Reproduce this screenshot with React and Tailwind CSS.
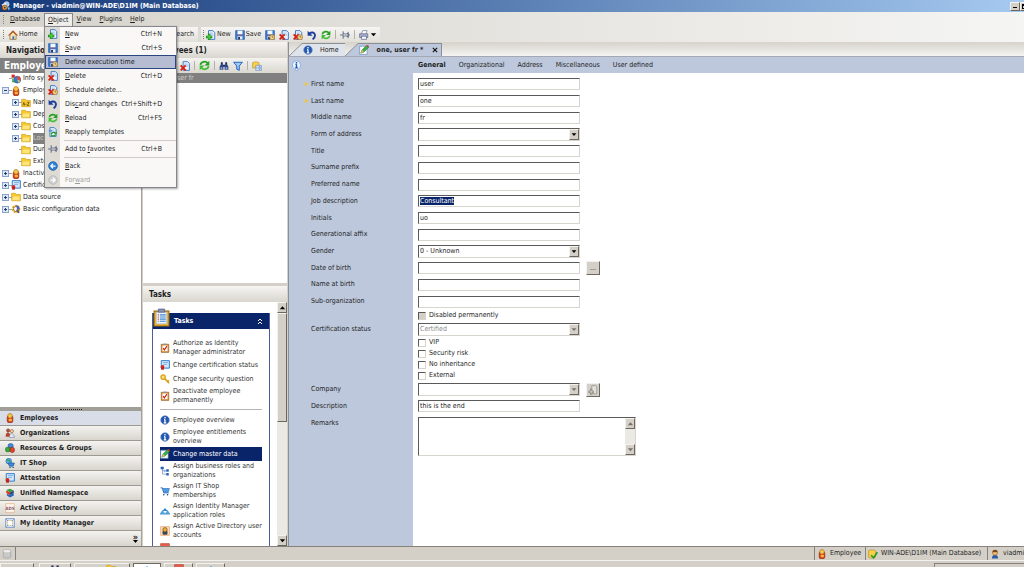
import React, { useEffect, useRef } from "react";

const Page = ({ x = 3 }) => (
  <>
    <path d={`M${x} 1h7l3 3v11H${x}z`} fill="#e8f1fd" stroke="#2f6fc4" strokeWidth="1.4" />
    <path d={`M${x + 2} 5h5M${x + 2} 8h6`} stroke="#6fa3e0" />
  </>
);

const Clock = () => (
  <>
    <circle cx="11.5" cy="11.5" r="4" fill="#f4d58a" stroke="#a3762b" />
    <path d="M11.5 9v2.5h2" stroke="#5f4212" fill="none" />
  </>
);

const Cross = () => (
  <path d="M1 7l8 8M9 7l-8 8" stroke="#d8200f" strokeWidth="3" fill="none" />
);

const Disk = () => (
  <>
    <path d="M1 1h14v14H1z" fill="#2f7bdc" stroke="#1b4fa0" />
    <path d="M4 1h8v6H4z" fill="#f5f9ff" />
    <path d="M4 10h8v5H4z" fill="#e8edf5" />
    <path d="M2 8h12" stroke="#d64a35" />
    <path d="M5 11h3v4H5z" fill="#26344f" />
  </>
);

const Person = () => (
  <>
    <rect x="3.5" y="4" width="9" height="11.5" rx="3" fill="#d93a1d" stroke="#8c2412" />
    <circle cx="8" cy="4.5" r="3.7" fill="#f8c64a" stroke="#a96d12" />
    <rect x="6" y="9" width="5" height="4" rx="1" fill="#f6b93b" />
  </>
);

const glyphs = {
  app: (
    <>
      <circle cx="9" cy="5" r="4" fill="#9cc7f2" stroke="#e3efff" />
      <path d="M1 6l6-4 2 5-5 3z" fill="#e9eef7" />
      <circle cx="6" cy="10.5" r="4" fill="#e99a32" stroke="#7b4210" />
      <circle cx="6" cy="10.5" r="1.5" fill="#1d3e7e" />
      <path d="M10 9l5 2-3 4z" fill="#6fb2ee" />
    </>
  ),
  home: (
    <>
      <path d="M3 8v7h10V8L8 3z" fill="#f6e3b5" stroke="#8a5a21" />
      <path d="M1 9l7-7 7 7" fill="none" stroke="#b4541c" strokeWidth="2" />
      <path d="M7 10h3v5H7z" fill="#3e74bd" />
    </>
  ),
  new: (
    <>
      <Page x={4} />
      <path d="M5 6v10M0 11h10" stroke="#167d16" strokeWidth="4" />
      <path d="M5 7v8M1 11h8" stroke="#4fd03f" strokeWidth="2.2" />
    </>
  ),
  save: <Disk />,
  saveTime: (
    <>
      <Disk />
      <Clock />
    </>
  ),
  delete: (
    <>
      <Page x={5} />
      <Cross />
    </>
  ),
  deleteTime: (
    <>
      <Page x={4} />
      <Cross />
      <Clock />
    </>
  ),
  undo: (
    <>
      <path d="M4 5c8-4 12 4 5 10" fill="none" stroke="#1c3f9c" strokeWidth="3" />
      <path d="M1 1v8h8z" fill="#1c3f9c" />
    </>
  ),
  reload: (
    <>
      <path d="M2 7c1-5 8-6 11-2" fill="none" stroke="#27a022" strokeWidth="2.6" />
      <path d="M15 1v7H8z" fill="#27a022" />
      <path d="M14 9c-1 5-8 6-11 2" fill="none" stroke="#3fbd35" strokeWidth="2.6" />
      <path d="M1 15V8h7z" fill="#3fbd35" />
    </>
  ),
  templates: (
    <>
      <Page x={3} />
      <path d="M1 6l5 0-2-2M6 6l-2 2" stroke="#2f6fc4" fill="none" />
      <path d="M5 12c1-4 5-4 7-2M12 12c-1 3-5 3-7 1" fill="none" stroke="#1f9a2b" strokeWidth="2" />
      <path d="M14 7v4h-4z" fill="#1f9a2b" />
    </>
  ),
  pin: (
    <path
      d="M0 8h5M5 2v12M5 5c3 2 5 2 8 0v6c-3-2-5-2-8 0M13 3v10M13 8h3"
      fill="none"
      stroke="#5f6b85"
      strokeWidth="1.5"
    />
  ),
  back: (
    <>
      <circle cx="8" cy="8" r="7" fill="#2a80d8" stroke="#14509c" />
      <path d="M12 8H5M8 4.500L4.500 8 8 11.500" fill="none" stroke="#fff" strokeWidth="2" />
    </>
  ),
  forward: (
    <>
      <circle cx="8" cy="8" r="7" fill="#cfcfcf" stroke="#b3b3b3" />
      <path d="M4 8h7M8 4.500L11.500 8 8 11.500" fill="none" stroke="#fff" strokeWidth="2" />
    </>
  ),
  print: (
    <>
      <path d="M4 6l2-5h7l-2 5" fill="#fff" stroke="#5c6689" />
      <path d="M1 6h13v6H1z" fill="#aab2cf" stroke="#4d577d" />
      <path d="M4 10h8v5H4z" fill="#f5f6fb" stroke="#4d577d" />
    </>
  ),
  find: (
    <>
      <path d="M3 2h3v4H3zM10 2h3v4h-3zM6 6h4v3H6z" fill="#1d2f5e" />
      <path d="M1 14V9l2-4h3l1 4v5zM9 14V9l1-4h3l2 4v5z" fill="#2c4580" />
      <path d="M2.500 10h3v3h-3zM10.500 10h3v3h-3z" fill="#94a8d3" />
    </>
  ),
  filter: <path d="M1 2h14l-5 6v7l-4-2V8z" fill="#9cc8f7" stroke="#1f5fbb" strokeWidth="1.5" />,
  folderPage: (
    <>
      <path d="M1 3c0-2 10-2 10 0v8H1z" fill="#fbd24a" stroke="#b78a17" />
      <path d="M6 7h9v8H6z" fill="#eef4fd" stroke="#5d7fb3" />
      <path d="M8 9v4M11 9h2v4h-2z" fill="none" stroke="#2f6fc4" />
    </>
  ),
  folder: (
    <>
      <path d="M1 2h6l1.500 2H15v10H1z" fill="#f7c92e" stroke="#c79a16" />
      <path d="M3 7h11l-1 6H2z" fill="#fde47c" />
    </>
  ),
  folderAz: (
    <>
      <path d="M1 2h6l1.500 2H15v10H1z" fill="#f7c92e" stroke="#c79a16" />
      <path d="M3 12l1.500-5L6 12M7 10h2M10 7h3l-3 5h3" fill="none" stroke="#5a430a" strokeWidth="1.200" />
    </>
  ),
  info: (
    <>
      <circle cx="8" cy="8" r="7" fill="#2458b0" stroke="#7f9fd0" />
      <path d="M8 3v2.500M8 7v6M6.500 7.500H8M6 12.500h4" stroke="#fff" strokeWidth="2" />
    </>
  ),
  hint: (
    <>
      <path d="M8 1a6.500 6.500 0 0 1 2 12.500L8 16l-2-2.500A6.500 6.500 0 0 1 8 1z" fill="#e8f3ff" stroke="#6d9bd3" />
      <path d="M8 3v2M8 6v6M6.500 6.500H8M6 11.500h4" stroke="#1e57b4" strokeWidth="2" />
    </>
  ),
  chart: (
    <>
      <path d="M1 1h5v5H1z" fill="#d8261c" />
      <circle cx="10" cy="9" r="5.500" fill="#3d78cf" stroke="#24549c" />
      <path d="M10 9V3.500A5.500 5.500 0 0 1 15.500 9z" fill="#e8462c" />
      <path d="M10 9l5 2-3 3z" fill="#f9cf47" />
      <path d="M3 7v5h3" fill="none" stroke="#2a9a2a" strokeWidth="2" />
    </>
  ),
  person: <Person />,
  certificate: (
    <>
      <path d="M2 1h13v12H2z" fill="#cfe6fb" stroke="#2d78c8" strokeWidth="1.500" />
      <path d="M5 4h8M5 7h6" stroke="#4f97dd" />
      <circle cx="4" cy="11" r="3" fill="#d8261c" />
      <path d="M2 12v4l2-1 2 1v-4z" fill="#b81c14" />
    </>
  ),
  gear: (
    <>
      <circle cx="8" cy="8" r="5" fill="none" stroke="#dca425" strokeWidth="3.500" strokeDasharray="3 1.200" />
      <circle cx="8" cy="8" r="4" fill="none" stroke="#8d6713" />
      <path d="M8 2c4 0 6 3 6 6l-4 1z" fill="#4d62b2" />
      <path d="M9 9l4 5" stroke="#3d4f96" strokeWidth="2.500" />
    </>
  ),
  organizations: (
    <>
      <circle cx="5" cy="4" r="2.500" fill="#c7553a" stroke="#6b2717" />
      <circle cx="11" cy="5" r="2.500" fill="#f1d3b2" stroke="#8b5a32" />
      <path d="M1 14c0-9 7-9 8 0z" fill="#b8432c" />
      <path d="M7 15c0-8 7-8 8 0z" fill="#e8edf6" stroke="#71809f" />
    </>
  ),
  resources: (
    <>
      <rect x="5" y="1" width="8" height="7" rx="3" fill="#4a86d8" stroke="#1f4f97" />
      <rect x="1" y="7" width="7" height="7" rx="2" fill="#32ad3b" stroke="#146a1c" />
      <rect x="8" y="7" width="7" height="8" rx="3" fill="#e0452f" stroke="#8d1f10" />
    </>
  ),
  shop: (
    <>
      <circle cx="6" cy="5" r="4.500" fill="#5bb1ee" stroke="#1f64a5" />
      <path d="M3 4c3-3 4 3 6 1" stroke="#38a345" strokeWidth="2" fill="none" />
      <path d="M5 8h10l-2 5H7z" fill="#3f8ad9" stroke="#1b4e92" />
      <path d="M8 15h.1M13 15h.1" stroke="#1b3f72" strokeWidth="2" strokeLinecap="round" />
    </>
  ),
  namespace: (
    <>
      <path d="M2 3l6-2 6 3-6 3z" fill="#3d9c3d" />
      <path d="M2 4l6 3v4L2 8z" fill="#d6331f" />
      <path d="M3 9l5 2 6-3v4l-6 3-5-3z" fill="#2c62bb" />
      <path d="M8 7l6-3v4l-6 3z" fill="#274579" />
    </>
  ),
  ads: (
    <>
      <path d="M1 1h14v14H1z" fill="#fdf4ea" stroke="#e3a878" />
      <text x="8" y="11" textAnchor="middle" fontSize="7" fontWeight="bold" fill="#8a5a78">
        ADS
      </text>
    </>
  ),
  identity: (
    <>
      <path d="M1 1h14v14H1z" fill="#dbe9fb" stroke="#4f78b8" />
      <path d="M4 4h8v8H4z" fill="#fff" stroke="#d4a13a" strokeDasharray="2 1" />
      <path d="M2 2l3 3M14 2l-3 3M2 14l3-3M14 14l-3-3" stroke="#4f78b8" />
    </>
  ),
  edit: (
    <>
      <path d="M1 2h12v13H1z" fill="#fafcff" stroke="#5a87bd" />
      <path d="M3 13l2-5 7-7 3 3-7 7z" fill="#3eb24a" stroke="#176624" />
      <path d="M3 13l2-5 3 3z" fill="#f5c04a" />
      <path d="M12 1l3 3 1-2-2-2z" fill="#d8361c" />
    </>
  ),
  clipboard: (
    <>
      <path d="M1 2h14v14H1z" fill="#f4b92e" stroke="#9a6a12" />
      <path d="M3 3h10v11H3z" fill="#eef5fd" stroke="#7da0cb" strokeWidth=".5" />
      <path d="M5 0h6v3H5z" fill="#8891b3" stroke="#4e577c" strokeWidth=".6" />
      <path d="M6.500 5.500h5.500M6.500 7.500h5.500M6.500 9.500h5.500M6.500 11.500h5.500" stroke="#3b86d4" />
      <path d="M4.500 5.500h1M4.500 7.500h1M4.500 9.500h1M4.500 11.500h1" stroke="#d8361c" />
    </>
  ),
  task: (
    <>
      <path d="M2 2h12v13H2z" fill="#e09a3c" stroke="#8a5117" />
      <path d="M4 4h8v9H4z" fill="#fff" />
      <path d="M6 1h4v2H6z" fill="#8891b3" />
      <path d="M5 8l2 3 4-6" fill="none" stroke="#c9201a" strokeWidth="1.800" />
    </>
  ),
  key: (
    <>
      <circle cx="5" cy="5" r="3.500" fill="#fbe07a" stroke="#d9a11c" strokeWidth="2" />
      <path d="M7.500 7.500l7 7M12 12l2-2" stroke="#d9a11c" strokeWidth="2.600" />
    </>
  ),
  roles: (
    <>
      <path d="M4 4v9h6M4 7h6" fill="none" stroke="#6a7ea6" />
      <path d="M1 1h5v4H1zM10 5h4v4h-4zM10 11h4v4h-4z" fill="#2662b8" />
      <path d="M6 7h3v3H6z" fill="#8ab4ea" />
    </>
  ),
  cart: (
    <>
      <path d="M1 3h3l2 8h8" fill="none" stroke="#2c6cb7" strokeWidth="1.500" />
      <path d="M4 4h11l-2 6H6z" fill="#4d9fe6" stroke="#2c6cb7" />
      <path d="M6 14h.1M12 14h.1" stroke="#1f4f8c" strokeWidth="2.500" strokeLinecap="round" />
    </>
  ),
  appRoles: (
    <>
      <path d="M8 3l4 5H4z" fill="#2b86cf" />
      <path d="M4 7l4 6H0zM12 7l4 6H8z" fill="#4aa9e4" stroke="#2c78bb" strokeWidth=".7" />
    </>
  ),
  account: (
    <>
      <path d="M1 1h14v14H1z" fill="#fce0c2" stroke="#ea9455" />
      <rect x="4" y="7" width="8" height="7" rx="2" fill="#38485c" />
      <circle cx="8" cy="6" r="3.500" fill="#efae3b" stroke="#5d3d10" />
    </>
  ),
  redBox: <path d="M1 1h14v14H1z" fill="#e8604c" stroke="#b53a2a" />,
  database: (
    <>
      <path d="M2 3c0-2 12-2 12 0v10c0 2-12 2-12 0z" fill="#c9c9c9" stroke="#9b9b9b" />
      <ellipse cx="8" cy="3.500" rx="5.500" ry="1.800" fill="#efefef" />
    </>
  ),
  databaseOk: (
    <>
      <path d="M1 3c0-2 11-2 11 0v10c0 2-11 2-11 0z" fill="#f8cf45" stroke="#b98a18" />
      <path d="M5 10l4 4 6-9" fill="none" stroke="#249a2b" strokeWidth="2.600" />
    </>
  ),
  user: (
    <>
      <path d="M3 15c0-8 10-8 10 0z" fill="#2b5aa5" />
      <circle cx="8" cy="6" r="4" fill="#f4c27a" stroke="#8b5a1c" />
      <path d="M4 5c0-5 8-5 8 0z" fill="#7a4517" />
    </>
  ),
  assign: (
    <>
      <path d="M6 1h6l2 2v11H6z" fill="#e2e0db" stroke="#85827b" />
      <path d="M5 6v9M1 11h8" fill="none" stroke="#77746e" strokeWidth="3.500" />
      <path d="M5 7v7M2 11h6" fill="none" stroke="#d8d5ce" strokeWidth="1.500" />
    </>
  ),
};

const Icon = ({ name, className = "w-[10px] h-[10px]" }) => (
  <svg viewBox="0 0 16 16" className={`shrink-0 ${className}`} aria-hidden="true">
    {glyphs[name]}
  </svg>
);

const Arrow = ({ up = false, muted = false }) => (
  <svg viewBox="0 0 10 10" className="w-[9px] h-[9px]" aria-hidden="true">
    <path d={up ? "M2 7h6L5 3.500z" : "M2 3.500h6L5 7z"} fill={muted ? "#77736c" : "#000"} />
  </svg>
);

const bevel =
  "bg-[#d4d0c8] border border-t-[#f4f2ee] border-l-[#f4f2ee] border-r-[#6b6862] border-b-[#6b6862]";
const inset =
  "border border-t-[#5a5a5a] border-l-[#5a5a5a] border-r-[#d8d5ce] border-b-[#d8d5ce]";
const paneHeader =
  "flex items-center h-[16px] shrink-0 px-[6px] text-[8px] font-bold bg-linear-to-b from-[#f6f5f2] to-[#d9d6cf]";

const Grip = () => <span className="w-px h-[9px] border-l border-dotted border-[#85827b]" />;
const Divider = () => <span className="w-px h-[9px] bg-[#b3b0a9]" />;

/* A label whose access key is underlined */
const Access = ({ text, k }) => {
  const i = text.indexOf(k);
  if (!k || i < 0) return <span>{text}</span>;
  return (
    <span>
      {text.slice(0, i)}
      <u>{k}</u>
      {text.slice(i + 1)}
    </span>
  );
};

const menuGroups = [
  [
    { icon: "new", text: "New", k: "N", keys: "Ctrl+N" },
    { icon: "save", text: "Save", k: "S", keys: "Ctrl+S" },
    { icon: "saveTime", text: "Define execution time", active: true },
    { icon: "delete", text: "Delete", k: "D", keys: "Ctrl+D" },
    { icon: "deleteTime", text: "Schedule delete..." },
    { icon: "undo", text: "Discard changes", k: "c", keys: "Ctrl+Shift+D" },
    { icon: "reload", text: "Reload", k: "R", keys: "Ctrl+F5" },
    { icon: "templates", text: "Reapply templates" },
  ],
  [{ icon: "pin", text: "Add to favorites", k: "f", keys: "Ctrl+B" }],
  [
    { icon: "back", text: "Back", k: "B" },
    { icon: "forward", text: "Forward", k: "w", disabled: true },
  ],
];

const ObjectMenu = () => (
  <div
    role="menu"
    className="absolute left-0 top-full z-20 w-[133px] border border-[#85878c] bg-[#f9f8f7] bg-[linear-gradient(to_right,#dedbd4_15px,#f9f8f7_15px)] shadow-[1px_1px_2px_rgba(0,0,0,0.35)]"
  >
    {menuGroups.map((group, i) => (
      <div key={i}>
        {i > 0 && <div className="ml-[19px] h-px my-px bg-[#cfccc5]" />}
        {group.map((item) => (
          <button
            key={item.text}
            role="menuitem"
            disabled={item.disabled}
            className={`flex items-center w-full h-[14px] pl-[2px] pr-[13px] border ${
              item.active ? "bg-[#b6bdd2] border-[#2b4583]" : "border-transparent"
            } ${item.disabled ? "text-[#a09d97]" : ""}`}
          >
            <Icon name={item.icon} />
            <span className="ml-[7px] flex-1 text-left">
              <Access text={item.text} k={item.k} />
            </span>
            <span>{item.keys}</span>
          </button>
        ))}
      </div>
    ))}
  </div>
);

const MenuBar = () => (
  <nav className="flex items-center h-[15px] shrink-0 pl-[3px] bg-linear-to-r from-[#d6d3cc] to-[#f5f5f3]">
    <Grip />
    <button className="pl-[6px] pr-[4px]">
      <Access text="Database" k="D" />
    </button>
    <div className="relative">
      <button className="h-[13px] px-[3px] border border-b-0 border-[#85878c] bg-[#f0eeea]">
        <Access text="Object" k="O" />
      </button>
      <ObjectMenu />
    </div>
    <button className="px-[4px]">
      <Access text="View" k="V" />
    </button>
    <button className="px-[4px]">
      <Access text="Plugins" k="P" />
    </button>
    <button className="px-[4px]">
      <Access text="Help" k="H" />
    </button>
  </nav>
);

const ToolBar = () => (
  <div className="flex items-center h-[15px] shrink-0 bg-linear-to-r from-[#d6d3cc] to-[#f5f5f3]">
    <div className="flex items-center h-full w-[198px] pl-[3px] bg-linear-to-b from-[#f7f6f4] to-[#e2dfd9]">
      <Grip />
      <button className="flex items-center ml-[4px] gap-px">
        <Icon name="home" />
        Home
      </button>
      <span className="ml-[2px]">
        <Divider />
      </span>
      <button className="ml-auto mr-[4px]">Search</button>
    </div>
    <div className="flex items-center h-full ml-[3px] px-[2px] bg-linear-to-b from-[#f7f6f4] to-[#e2dfd9]">
      <Grip />
      <button className="flex items-center ml-[2px] gap-px">
        <Icon name="new" />
        New
      </button>
      <button className="flex items-center ml-[4px] gap-px">
        <Icon name="save" />
        Save
      </button>
      <div className="flex items-center gap-[4px] ml-[4px]">
        {["saveTime", "delete", "deleteTime", "undo", "reload"].map((name) => (
          <button key={name} aria-label={name}>
            <Icon name={name} />
          </button>
        ))}
        <Divider />
        <button aria-label="Add to favorites">
          <Icon name="pin" />
        </button>
        <Divider />
        <button aria-label="Print" className="flex items-center">
          <Icon name="print" />
          <Arrow />
        </button>
      </div>
    </div>
  </div>
);

const tree = [
  { icon: "chart", text: "Info system", level: 0 },
  { icon: "person", text: "Employees", level: 0, box: "-" },
  { icon: "folderAz", text: "Names", level: 1, box: "+" },
  { icon: "folder", text: "Departments", level: 1, box: "+" },
  { icon: "folder", text: "Cost centers", level: 1, box: "+" },
  { icon: "folder", text: "Locations", level: 1, box: "+", selected: true },
  { icon: "folder", text: "Dummies", level: 1 },
  { icon: "folder", text: "External", level: 1 },
  { icon: "person", text: "Inactive employees", level: 0, box: "+" },
  { icon: "certificate", text: "Certification", level: 0, box: "+" },
  { icon: "folder", text: "Data source", level: 0, box: "+" },
  { icon: "gear", text: "Basic configuration data", level: 0, box: "+" },
];

const TreeBox = ({ sign }) => (
  <svg viewBox="0 0 7 7" className="w-[7px] h-[7px] shrink-0" aria-hidden="true">
    {sign && (
      <>
        <rect x=".5" y=".5" width="6" height="6" fill="#dfe8f6" stroke="#8ba3c7" />
        <path d={sign === "+" ? "M2 3.500h3M3.500 2v3" : "M2 3.500h3"} stroke="#1e3c78" />
      </>
    )}
  </svg>
);

const modules = [
  ["person", "Employees"],
  ["organizations", "Organizations"],
  ["resources", "Resources & Groups"],
  ["shop", "IT Shop"],
  ["certificate", "Attestation"],
  ["namespace", "Unified Namespace"],
  ["ads", "Active Directory"],
  ["identity", "My Identity Manager"],
];

const Navigation = () => (
  <aside className="flex flex-col w-[142px] shrink-0 border-r border-[#a5a29b] bg-white">
    <h2 className={paneHeader}>Navigation</h2>
    <h3 className="flex items-center h-[15px] shrink-0 px-[4px] bg-[#808080] text-[10px] font-bold text-white">
      Employees
    </h3>
    <ul className="grid auto-rows-fr h-[142px] shrink-0 pl-[2px]">
      {tree.map((node) => (
        <li
          key={node.text}
          className={`flex items-center ${node.level ? "pl-[10px]" : ""}`}
        >
          <TreeBox sign={node.box} />
          <span className="w-[2px] border-t border-dotted border-[#a0a0a0]" />
          <Icon name={node.icon} />
          <span
            className={`ml-[2px] flex-1 leading-[11px] ${
              node.selected ? "bg-[#808080] text-[#d4d0c8]" : ""
            }`}
          >
            {node.text}
          </span>
        </li>
      ))}
    </ul>
    <div className="flex-1" />
    <div className="flex items-center justify-center h-[4px] shrink-0 bg-[#a19e98]">
      <span className="w-[22px] border-t border-dotted border-[#222]" />
    </div>
    <div className="grid auto-rows-fr h-[120px] shrink-0">
      {modules.map(([icon, text], i) => (
        <button
          key={text}
          className={`flex items-center gap-[5px] px-[5px] border-b border-[#9d9a93] text-[7px] font-bold ${
            i === 0 ? "bg-[#d9dde8]" : "bg-linear-to-b from-[#f4f3f0] to-[#d8d5ce]"
          }`}
        >
          <Icon name={icon} />
          {text}
        </button>
      ))}
    </div>
    <button
      aria-label="More modules"
      className="flex flex-col items-end justify-center h-[15px] shrink-0 pr-[3px] bg-linear-to-b from-[#f4f3f0] to-[#d8d5ce] text-[9px] font-bold leading-[6px]"
    >
      »
      <svg viewBox="0 0 5 3" className="w-[5px] h-[3px]">
        <path d="M0 0h5L2.500 3z" />
      </svg>
    </button>
  </aside>
);

const tasks = [
  [
    { icon: "task", text: "Authorize as Identity\nManager administrator" },
    { icon: "certificate", text: "Change certification status" },
    { icon: "key", text: "Change security question" },
    { icon: "task", text: "Deactivate employee\npermanently" },
  ],
  [
    { icon: "info", text: "Employee overview" },
    { icon: "info", text: "Employee entitlements\noverview" },
    { icon: "edit", text: "Change master data", active: true },
    { icon: "roles", text: "Assign business roles and\norganizations" },
    { icon: "cart", text: "Assign IT Shop\nmemberships" },
    { icon: "appRoles", text: "Assign Identity Manager\napplication roles" },
    { icon: "account", text: "Assign Active Directory user\naccounts" },
    { icon: "redBox", text: "" },
  ],
];

const Tasks = () => (
  <section className="flex flex-col flex-1 min-h-0">
    <h2 className={paneHeader}>Tasks</h2>
    <div className="flex flex-1 min-h-0 bg-white">
      <div className="flex-1 min-w-0 pl-[9px] pr-[7px] pt-[11px] overflow-hidden">
        <div className="min-h-full border-x border-[#4a5f9a]">
          <h3 className="flex items-center h-[16px] pr-[6px] bg-[#0a246a] text-white font-bold">
            <Icon name="clipboard" className="w-[17px] h-[19px] -mt-[7px]" />
            <span className="ml-[4px] flex-1">Tasks</span>
            <svg viewBox="0 0 6 7" className="w-[6px] h-[7px]" fill="none" stroke="#fff">
              <path d="M1 3l2-2 2 2M1 6l2-2 2 2" />
            </svg>
          </h3>
          <div className="px-[7px] pt-[9px]">
            {tasks.map((group, i) => (
              <div key={i} className={i > 0 ? "mt-[3px] pt-[3px] border-t border-[#b5b5b5]" : ""}>
                {group.map((task) => (
                  <a
                    key={task.text}
                    href="#"
                    className={`flex items-center gap-[3px] min-h-[14px] py-px leading-[9px] ${
                      task.active ? "bg-[#0a246a] text-white" : "text-[#333]"
                    }`}
                  >
                    <Icon name={task.icon} />
                    <span className="flex-1 -mr-[6px] whitespace-pre">{task.text}</span>
                  </a>
                ))}
              </div>
            ))}
          </div>
        </div>
      </div>
      <div className="flex flex-col w-[10px] shrink-0 bg-[#ebe9e4]">
        <button aria-label="Scroll up" className={bevel}>
          <Arrow up />
        </button>
        <div className={`h-[109px] ${bevel}`} />
        <button aria-label="Scroll down" className={`mt-auto ${bevel}`}>
          <Arrow />
        </button>
      </div>
    </div>
  </section>
);

const ResultList = () => (
  <section className="flex flex-col w-[144px] shrink-0 ml-px">
    <h2 className={paneHeader}>Employees (1)</h2>
    <div className="flex items-center gap-[4px] h-[15px] shrink-0 pl-[4px] bg-linear-to-b from-[#f4f3f0] to-[#dbd8d1]">
      <button aria-label="New">
        <Icon name="new" />
      </button>
      <button aria-label="Save">
        <Icon name="save" />
      </button>
      <button aria-label="Delete" className="ml-[5px]">
        <Icon name="delete" />
      </button>
      <Divider />
      <button aria-label="Reload">
        <Icon name="reload" className="w-[11px] h-[11px]" />
      </button>
      <Divider />
      <button aria-label="Find">
        <Icon name="find" />
      </button>
      <button aria-label="Filter">
        <Icon name="filter" />
      </button>
      <Divider />
      <button aria-label="Limit">
        <Icon name="folderPage" />
      </button>
    </div>
    <div className="h-[210px] shrink-0 bg-white">
      <div className="flex items-center h-[10px] pl-[30px] bg-[#808080] text-[#d4d0c8]">user fr</div>
    </div>
    <div className="h-[3px] shrink-0 bg-[#d4d0c8]" />
    <Tasks />
  </section>
);

const Label = ({ id, text, required }) => (
  <label htmlFor={id} className="flex items-center w-[124px] shrink-0 pl-[16px] mr-[5px]">
    <svg viewBox="0 0 4 6" className="w-[3px] h-[6px] mr-[3px]" aria-hidden="true">
      {required && <path d="M0 0l4 3-4 3z" fill="#f8c818" />}
    </svg>
    {text}
  </label>
);

const Select = ({ id, value = "", disabled }) => (
  <div className={`relative flex w-[162px] h-[13px] bg-white ${inset}`}>
    <select
      id={id}
      disabled={disabled}
      defaultValue={value}
      className={`flex-1 appearance-none pl-px outline-none ${
        disabled ? "text-[#8a8a8a] opacity-100" : ""
      }`}
    >
      <option>{value}</option>
    </select>
    <span
      className={`absolute right-0 inset-y-0 flex items-center justify-center w-[10px] pointer-events-none ${bevel}`}
    >
      <Arrow muted={disabled} />
    </span>
  </div>
);

const TextInput = ({ id, value = "", inputRef }) => (
  <input
    id={id}
    ref={inputRef}
    type="text"
    defaultValue={value}
    className={`w-[162px] h-[12px] px-px bg-white outline-none caret-transparent selection:bg-[#0a246a] selection:text-white ${inset}`}
  />
);

const fields = [
  { id: "first", text: "First name", value: "user", required: true },
  { id: "last", text: "Last name", value: "one", required: true },
  { id: "middle", text: "Middle name", value: "fr" },
  { id: "address", text: "Form of address", select: true },
  { id: "title", text: "Title" },
  { id: "surname", text: "Surname prefix" },
  { id: "preferred", text: "Preferred name" },
  { id: "job", text: "Job description", value: "Consultant" },
  { id: "initials", text: "Initials", value: "uo" },
  { id: "affix", text: "Generational affix" },
  { id: "gender", text: "Gender", value: "0 - Unknown", select: true },
  { id: "birth", text: "Date of birth", browse: true },
  { id: "birthname", text: "Name at birth" },
  { id: "suborg", text: "Sub-organization" },
];

const Check = ({ id, text, disabled }) => (
  <div className="flex items-center h-[11px] pl-[129px]">
    <input
      id={id}
      type="checkbox"
      disabled={disabled}
      className={`appearance-none w-[8px] h-[8px] ${inset} ${disabled ? "bg-[#d4d0c8]" : "bg-white"}`}
    />
    <label htmlFor={id} className="ml-[3px]">
      {text}
    </label>
  </div>
);

const EmployeeForm = () => {
  const jobRef = useRef(null);

  useEffect(() => {
    jobRef.current.focus();
    jobRef.current.select();
  }, []);

  return (
    <form className="flex-1 pt-[3px] overflow-hidden bg-[linear-gradient(to_right,#bdc8dc_124px,#fff_124px)]">
      <div className="grid auto-rows-fr h-[234px]">
        {fields.map((f) => (
          <div key={f.id} className="flex items-center">
            <Label id={f.id} text={f.text} required={f.required} />
            {f.select ? (
              <Select id={f.id} value={f.value} />
            ) : (
              <TextInput id={f.id} value={f.value} inputRef={f.id === "job" ? jobRef : undefined} />
            )}
            {f.browse && (
              <button
                type="button"
                className={`w-[14px] h-[14px] ml-[6px] leading-[8px] ${bevel}`}
              >
                ...
              </button>
            )}
          </div>
        ))}
      </div>
      <Check id="disabled" text="Disabled permanently" disabled />
      <div className="flex items-center h-[16px]">
        <Label id="certification" text="Certification status" />
        <Select id="certification" value="Certified" disabled />
      </div>
      <Check id="vip" text="VIP" />
      <Check id="risk" text="Security risk" />
      <Check id="inheritance" text="No inheritance" />
      <Check id="external" text="External" />
      <div className="flex items-center h-[17px]">
        <Label id="company" text="Company" />
        <Select id="company" disabled />
        <button
          type="button"
          aria-label="Assign company"
          className={`flex items-center justify-center w-[14px] h-[14px] ml-[6px] ${bevel}`}
        >
          <Icon name="assign" />
        </button>
      </div>
      <div className="flex items-center h-[16px]">
        <Label id="description" text="Description" />
        <TextInput id="description" value="this is the end" />
      </div>
      <div className="flex items-start pt-[3px]">
        <div className="flex h-[12px]">
          <Label id="remarks" text="Remarks" />
        </div>
        <div className={`flex w-[218px] h-[39px] bg-white ${inset}`}>
          <textarea id="remarks" className="flex-1 resize-none outline-none" />
          <div className="flex flex-col justify-between w-[10px] bg-[#ebe9e4]">
            <button type="button" aria-label="Scroll up" className={bevel}>
              <Arrow up muted />
            </button>
            <button type="button" aria-label="Scroll down" className={bevel}>
              <Arrow muted />
            </button>
          </div>
        </div>
      </div>
    </form>
  );
};

const TabEdge = ({ fill }) => (
  <svg viewBox="0 0 14 13" className="w-[14px] h-[13px] shrink-0" aria-hidden="true">
    <path d="M0 13L12 1.500Q13 .5 14 .5V13z" fill={fill} />
    <path d="M0 13L12 1.500Q13 .5 14 .5" fill="none" stroke="#8c8f96" />
  </svg>
);

const Document = () => (
  <main className="flex flex-col flex-1 min-w-0 ml-px border-l border-[#8c8f96] bg-[#bdc8dc]">
    <div className="flex items-end h-[15px] shrink-0 border-b border-[#a3a8b2] bg-linear-to-b from-[#d6d3cc] to-[#f5f4f2]">
      <TabEdge fill="#dfe3ea" />
      <button className="flex items-center gap-[7px] h-[13px] pr-[6px] border-t border-[#8c8f96] bg-[#dfe3ea]">
        <Icon name="info" />
        Home
      </button>
      <TabEdge fill="#bdc8dc" />
      <button className="flex items-center gap-[8px] h-[13px] pr-[9px] border-t border-[#8c8f96] bg-[#bdc8dc] font-bold">
        <Icon name="edit" />
        one, user fr *
      </button>
      <button
        aria-label="Close"
        className="flex items-center h-[13px] pr-[3px] border-t border-r border-[#8c8f96] bg-[#bdc8dc]"
      >
        <svg viewBox="0 0 7 7" className="w-[6px] h-[6px]" stroke="#111" strokeWidth="1.300">
          <path d="M1 1l5 5M6 1l-5 5" />
        </svg>
      </button>
    </div>
    <div className="flex items-center h-[16px] shrink-0">
      <div className="w-[129px] pl-[2px]">
        <Icon name="hint" className="w-[11px] h-[11px]" />
      </div>
      <div className="flex gap-[13px]">
        <button className="font-bold">General</button>
        <button>Organizational</button>
        <button>Address</button>
        <button>Miscellaneous</button>
        <button>User defined</button>
      </div>
    </div>
    <EmployeeForm />
  </main>
);

const StatusCell = ({ icon, text, className = "" }) => (
  <div className={`flex items-center gap-[3px] h-[13px] pl-[2px] border-l border-[#85827b] ${className}`}>
    <Icon name={icon} />
    {text}
  </div>
);

const StatusBar = () => (
  <footer className="flex items-center h-[14px] shrink-0 border-t border-[#85827b] bg-[#d4d0c8] whitespace-nowrap">
    <div className="flex items-center h-[13px] w-[16px] pl-[2px] border-r border-[#85827b]">
      <Icon name="database" />
    </div>
    <div className="flex-1" />
    <StatusCell icon="person" text="Employee" className="w-[51px]" />
    <StatusCell icon="databaseOk" text="WIN-ADE\D1IM (Main Database)" className="w-[122px]" />
    <div className="w-[37px] overflow-hidden">
      <StatusCell icon="user" text="viadmin" />
    </div>
  </footer>
);

const TaskBar = () => (
  <div className="flex items-start gap-[3px] h-[7px] shrink-0 pt-[2px] border-t border-[#f4f2ee] bg-[#d4d0c8] overflow-hidden">
    <button aria-label="Start" className={`w-[34px] h-[14px] ${bevel}`} />
    <button aria-label="Server" className={`flex justify-center w-[32px] h-[14px] ml-[2px] ${bevel}`}>
      <Icon name="find" className="w-[12px] h-[12px]" />
    </button>
    <button aria-label="Explorer" className={`flex justify-center w-[56px] h-[14px] pl-[18px] ${bevel}`}>
      <Icon name="folder" />
    </button>
    <button aria-label="Manager" className="flex justify-center w-[28px] h-[14px] border border-[#6b6862] bg-white">
      <Icon name="appRoles" />
    </button>
    <button aria-label="Launchpad" className={`flex justify-center w-[29px] h-[14px] ${bevel}`}>
      <Icon name="redBox" />
    </button>
    <button aria-label="Designer" className={`flex justify-center w-[29px] h-[14px] ${bevel}`}>
      <Icon name="appRoles" />
    </button>
    <span className="flex-1" />
    <span className="w-[90px] h-[14px] border-t border-l border-[#85827b]" />
  </div>
);

const App = () => (
  <div className="flex flex-col h-screen overflow-hidden bg-[#d4d0c8] text-[7px] leading-[9px] text-[#1e1e1e] whitespace-nowrap font-['DejaVu_Sans_Condensed','DejaVu_Sans',sans-serif]">
    <header className="flex items-center h-[12px] shrink-0 pl-px bg-linear-to-r from-[#153878] to-[#a6caf0]">
      <Icon name="app" />
      <h1 className="ml-[2px] flex-1 text-[7px] font-bold text-white">
        Manager - viadmin@WIN-ADE\D1IM (Main Database)
      </h1>
      <div className="flex w-[14px] overflow-hidden">
        <button aria-label="Minimize" className={`flex items-end w-[10px] h-[9px] shrink-0 p-[2px] ${bevel}`}>
          <span className="w-[4px] h-px bg-black" />
        </button>
        <button aria-label="Restore" className={`w-[10px] h-[9px] shrink-0 p-px ${bevel}`}>
          <span className="block w-[5px] h-[5px] border border-t-2 border-black" />
        </button>
      </div>
    </header>
    <MenuBar />
    <ToolBar />
    <div className="flex flex-1 min-h-0">
      <Navigation />
      <ResultList />
      <Document />
    </div>
    <StatusBar />
    <TaskBar />
  </div>
);

export default App;
